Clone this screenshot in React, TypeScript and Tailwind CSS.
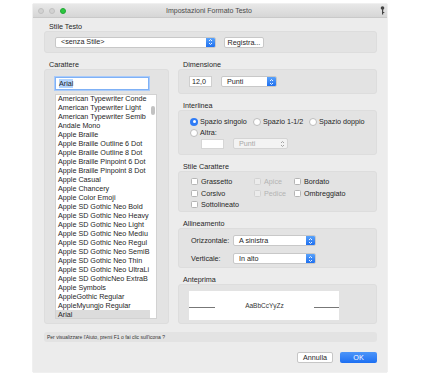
import type { ReactNode } from "react";

const fonts = [
  "American Typewriter Conde",
  "American Typewriter Light",
  "American Typewriter Semib",
  "Andale Mono",
  "Apple Braille",
  "Apple Braille Outline 6 Dot",
  "Apple Braille Outline 8 Dot",
  "Apple Braille Pinpoint 6 Dot",
  "Apple Braille Pinpoint 8 Dot",
  "Apple Casual",
  "Apple Chancery",
  "Apple Color Emoji",
  "Apple SD Gothic Neo Bold",
  "Apple SD Gothic Neo Heavy",
  "Apple SD Gothic Neo Light",
  "Apple SD Gothic Neo Mediu",
  "Apple SD Gothic Neo Regul",
  "Apple SD Gothic Neo SemiB",
  "Apple SD Gothic Neo Thin",
  "Apple SD Gothic Neo UltraLi",
  "Apple SD GothicNeo ExtraB",
  "Apple Symbols",
  "AppleGothic Regular",
  "AppleMyungjo Regular",
  "Arial",
];

function Arrows({ color = "white" }: { color?: string }) {
  return (
    <svg width="5" height="8" viewBox="0 0 5 8">
      <path d="M1 3 L2.5 1.5 L4 3 M1 5 L2.5 6.5 L4 5" stroke={color} strokeWidth="0.9" fill="none" />
    </svg>
  );
}

function Select({ label, w, disabled }: { label: string; w: string; disabled?: boolean }) {
  return (
    <div
      className={`${w} h-[11px] flex items-center rounded-[2px] border ${
        disabled ? "border-[#d4d4d4] bg-[#f3f3f3] text-[#a8a8a8]" : "border-[#c8c8c8] bg-white text-[#262626]"
      } overflow-hidden`}
    >
      <span className="flex-1 pl-[5px] leading-[10px] whitespace-nowrap">{label}</span>
      {disabled ? (
        <div className="w-[9px] h-full flex items-center justify-center">
          <Arrows color="#9a9a9a" />
        </div>
      ) : (
        <div className="w-[9px] h-full flex items-center justify-center bg-gradient-to-b from-[#5aa2fa] to-[#1d6ff0]">
          <Arrows />
        </div>
      )}
    </div>
  );
}

function Group({ title, h, children, className = "" }: { title: string; h: string; children?: ReactNode; className?: string }) {
  return (
    <div className={className}>
      <div className="h-[8px] leading-[8px] pl-[5px] text-[#262626]">{title}</div>
      <div className={`${h} rounded-[3px] bg-[#e3e3e3] border border-[#dddddd]`}>{children}</div>
    </div>
  );
}

function Radio({ on, label }: { on?: boolean; label: string }) {
  return (
    <div className="flex items-center gap-[2px] whitespace-nowrap">
      {on ? (
        <div className="w-[8px] h-[8px] rounded-full bg-[#2f7cf6] flex items-center justify-center">
          <div className="w-[3px] h-[3px] rounded-full bg-white" />
        </div>
      ) : (
        <div className="w-[8px] h-[8px] rounded-full bg-white border border-[#bdbdbd]" />
      )}
      <span>{label}</span>
    </div>
  );
}

function Check({ label, disabled, w }: { label: string; disabled?: boolean; w: string }) {
  return (
    <div className={`${w} flex items-center gap-[3px] whitespace-nowrap`}>
      <div
        className={`w-[7px] h-[7px] rounded-[1.5px] border ${
          disabled ? "border-[#d2d2d2] bg-[#ececec]" : "border-[#b5b5b5] bg-white"
        }`}
      />
      <span className={disabled ? "text-[#b3b3b3]" : ""}>{label}</span>
    </div>
  );
}

export default function App() {
  return (
    <div className="w-[424px] h-[378px] bg-white pl-[33px] pt-[4px] font-['Liberation_Sans',Arial,sans-serif] text-[7.2px] leading-[9px] text-[#262626]">
      <div className="w-[354px] h-[368px] bg-[#ececec] flex flex-col shadow-[0_0_1px_rgba(0,0,0,0.35)]">
        {/* title bar */}
        <div className="h-[14px] flex items-center bg-gradient-to-b from-[#e8e8e8] to-[#d6d6d6] border-b border-[#c9c9c9]">
          <div className="flex gap-[5px] pl-[5px]">
            <div className="w-[6px] h-[6px] rounded-full bg-[#d2d2d2] border border-[#c0c0c0]" />
            <div className="w-[6px] h-[6px] rounded-full bg-[#d2d2d2] border border-[#c0c0c0]" />
            <div className="w-[6px] h-[6px] rounded-full bg-[#2bc840] border border-[#22a834]" />
          </div>
          <div className="flex-1 text-center text-[#4a4a4a] text-[7px] -ml-[28px]">Impostazioni Formato Testo</div>
          <svg width="5" height="9" viewBox="0 0 5 9" className="mr-[2px]">
            <circle cx="2.5" cy="2" r="1.8" fill="#444" />
            <rect x="2" y="3" width="1.2" height="5.5" fill="#444" />
            <rect x="3" y="6" width="1.3" height="1" fill="#444" />
          </svg>
        </div>

        <div className="pl-[11px] pr-[10px]">
          <Group title="Stile Testo" h="h-[22px]" className="mt-[5px]">
            <div className="h-full flex items-center pl-[10px]">
              <Select label="<senza Stile>" w="w-[161px]" />
              <div className="ml-[8px] w-[40px] h-[11px] bg-white border border-[#c8c8c8] rounded-[2px] flex items-center justify-center">
                Registra...
              </div>
            </div>
          </Group>

          <div className="flex mt-[8px]">
            <Group title="Carattere" h="h-[255px]" className="w-[125px]">
              <div className="pl-[10px] pt-[7px]">
                <div className="w-[94px] h-[13px] bg-white border border-[#7fb1f6] shadow-[0_0_0_1px_#a9cbfa] flex items-center pl-[3px]">
                  <span className="bg-[#b3d4fd] leading-[9px]">Arial</span>
                </div>
                <div className="mt-[4px] w-[102px] h-[225px] bg-white border border-[#d2d2d2] overflow-hidden relative">
                  <div className="-mt-[1px]">
                    {fonts.map((f) => (
                      <div
                        key={f}
                        className={`h-[9px] leading-[9px] pl-[2px] whitespace-nowrap overflow-hidden w-[94px] ${
                          f === "Arial" ? "bg-[#dcdcdc]" : ""
                        }`}
                      >
                        {f}
                      </div>
                    ))}
                  </div>
                  <div className="absolute right-[1px] top-[11px] w-[4px] h-[9px] rounded-[2px] bg-[#c2c2c2]" />
                </div>
              </div>
            </Group>

            <div className="ml-[9px] w-[199px] flex flex-col">
              <Group title="Dimensione" h="h-[25px]">
                <div className="h-full flex items-center pl-[10px]">
                  <div className="w-[23px] h-[11px] bg-white border border-[#cfcfcf] leading-[10px] pl-[2px]">12,0</div>
                  <div className="ml-[9px]">
                    <Select label="Punti" w="w-[56px]" />
                  </div>
                </div>
              </Group>

              <Group title="Interlinea" h="h-[45px]" className="mt-[8px]">
                <div className="pl-[11px] pt-[5px] flex flex-col">
                  <div className="h-[11px] flex items-center">
                    <div className="w-[63px]"><Radio on label="Spazio singolo" /></div>
                    <div className="w-[56px]"><Radio label="Spazio 1-1/2" /></div>
                    <Radio label="Spazio doppio" />
                  </div>
                  <div className="h-[11px] flex items-center">
                    <Radio label="Altra:" />
                  </div>
                  <div className="h-[11px] flex items-center pl-[11px]">
                    <div className="w-[23px] h-[10px] bg-white border border-[#d6d6d6]" />
                    <div className="ml-[9px]">
                      <Select label="Punti" w="w-[55px]" disabled />
                    </div>
                  </div>
                </div>
              </Group>

              <Group title="Stile Carattere" h="h-[41px]" className="mt-[8px]">
                <div className="pl-[12px] pt-[4px] flex flex-col">
                  <div className="h-[11.5px] flex items-center">
                    <Check label="Grassetto" w="w-[63px]" />
                    <Check label="Apice" disabled w="w-[40px]" />
                    <Check label="Bordato" w="w-[60px]" />
                  </div>
                  <div className="h-[11.5px] flex items-center">
                    <Check label="Corsivo" w="w-[63px]" />
                    <Check label="Pedice" disabled w="w-[40px]" />
                    <Check label="Ombreggiato" w="w-[60px]" />
                  </div>
                  <div className="h-[11.5px] flex items-center">
                    <Check label="Sottolineato" w="w-[63px]" />
                  </div>
                </div>
              </Group>

              <Group title="Allineamento" h="h-[40px]" className="mt-[8px]">
                <div className="pl-[12px] pt-[6px] flex flex-col gap-[7px]">
                  <div className="h-[11px] flex items-center">
                    <span className="w-[42px]">Orizzontale:</span>
                    <Select label="A sinistra" w="w-[83px]" />
                  </div>
                  <div className="h-[11px] flex items-center">
                    <span className="w-[42px]">Verticale:</span>
                    <Select label="In alto" w="w-[83px]" />
                  </div>
                </div>
              </Group>

              <Group title="Anteprima" h="h-[40px]" className="mt-[8px]">
                <div className="pl-[10px] pt-[6px]">
                  <div className="w-[150px] h-[29px] bg-white flex items-center">
                    <div className="w-[26px] h-px bg-[#777] mt-[3px]" />
                    <div className="flex-1 text-center text-[6.5px] text-[#333]">AaBbCcYyZz</div>
                    <div className="w-[25px] h-px bg-[#777] mt-[3px]" />
                  </div>
                </div>
              </Group>
            </div>
          </div>

          <div className="mt-[8px] h-[10px] rounded-[3px] bg-[#e3e3e3] flex items-center pl-[3px] text-[5px] text-[#333]">
            Per visualizzare l'Aiuto, premi F1 o fai clic sull'icona ?
          </div>

          <div className="mt-[10px] flex justify-end gap-[7px]">
            <div className="w-[36px] h-[11px] bg-white border border-[#c6c6c6] rounded-[2px] flex items-center justify-center text-[7.2px]">
              Annulla
            </div>
            <div className="w-[37px] h-[11px] rounded-[2px] bg-gradient-to-b from-[#4c95f9] to-[#1c6ff2] text-white flex items-center justify-center text-[7.2px]">
              OK
            </div>
          </div>
        </div>
      </div>
    </div>
  );
}
